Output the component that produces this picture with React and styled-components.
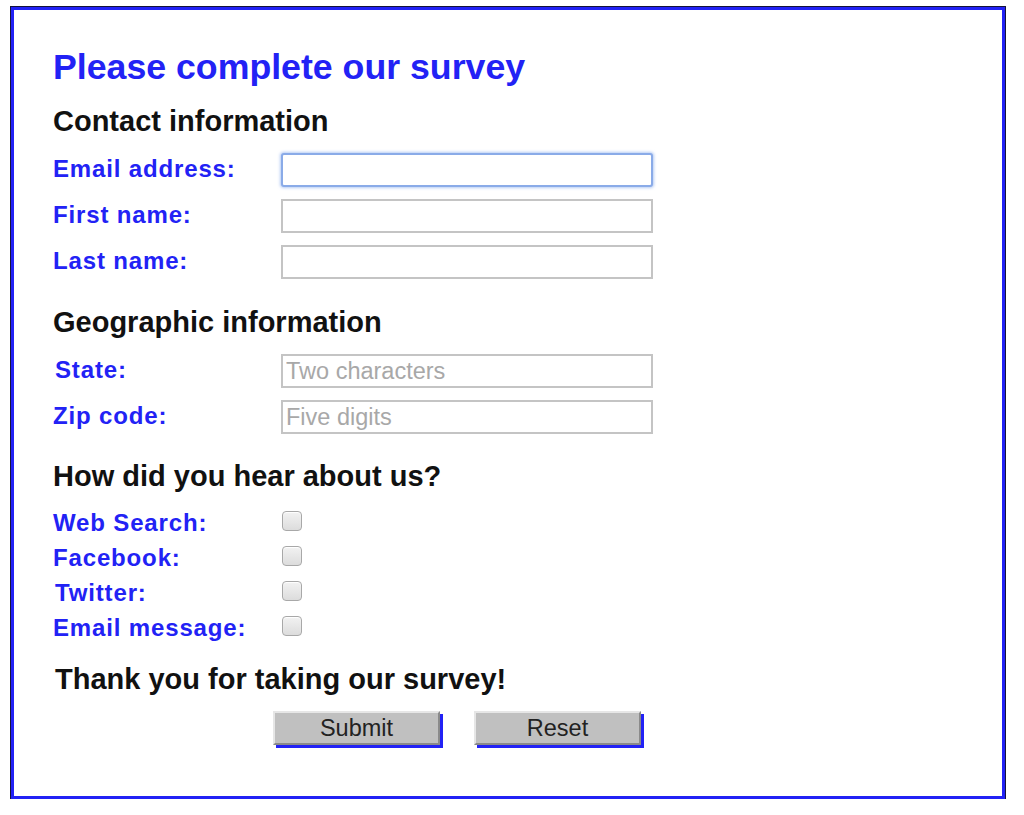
import React from "react";
import styled, { createGlobalStyle, css } from "styled-components";

const Global = createGlobalStyle`
  html, body { margin: 0; padding: 0; background: #ffffff; }
  body { font-family: "Liberation Sans", Arial, sans-serif; }
  * { box-sizing: border-box; }
`;

const BLUE = "#2222f5";

const Frame = styled.div`
  margin: 7px 0 0 11px;
  width: 994px;
  height: 792px;
  border: 3px solid ${BLUE};
  box-shadow: 0 0 0 1px #14143a;
  background: #fff;
  padding: 36px 0 0 39px;
`;

const Title = styled.h1`
  margin: 0;
  font-size: 35.7px;
  line-height: 43px;
  font-weight: bold;
  color: ${BLUE};
`;

const Section = styled.h2`
  margin: ${(p) => p.$top}px 0 0 ${(p) => p.$indent || 0}px;
  font-size: 29px;
  line-height: 34px;
  font-weight: bold;
  color: #111;
`;

const Fields = styled.div`
  display: flex;
  flex-direction: column;
  gap: ${(p) => p.$gap}px;
  margin-top: ${(p) => p.$top}px;
`;

const Row = styled.div`
  display: grid;
  grid-template-columns: 228px 372px;
  align-items: center;
  height: ${(p) => p.$h}px;
`;

const Label = styled.label`
  font-size: 24px;
  font-weight: bold;
  letter-spacing: 0.85px;
  color: ${BLUE};
  padding-left: ${(p) => p.$indent || 0}px;
  padding-bottom: ${(p) => p.$lift || 0}px;
`;

const TextInput = styled.input`
  width: 372px;
  height: 34px;
  margin: 0;
  padding: 0 3px;
  border: 2px solid #c4c4c4;
  background: #fff;
  font-family: "Liberation Sans", Arial, sans-serif;
  font-size: 23.5px;
  color: #222;
  outline: none;
  &::placeholder { color: #a8a8a8; }
  ${(p) =>
    p.$focused &&
    css`
      border-color: #8aabe8;
      border-radius: 3px;
      box-shadow: 0 0 3px 1px rgba(120, 160, 235, 0.55);
    `}
`;

const Check = styled.input.attrs({ type: "checkbox" })`
  appearance: none;
  -webkit-appearance: none;
  margin: 0 0 4px 1px;
  width: 20px;
  height: 20px;
  border: 1px solid #a8a8a8;
  border-radius: 4px;
  background: linear-gradient(#f2f2f2, #dcdcdc);
  box-shadow: inset 0 1px 1px #fff;
`;

const Buttons = styled.div`
  display: flex;
  gap: 34px;
  margin: 15px 0 0 220px;
`;

const Button = styled.button`
  width: 167px;
  height: 34px;
  margin: 0;
  padding: 0;
  background: #c0c0c0;
  border-style: solid;
  border-width: 2px;
  border-color: #e6e6e6 #8a8a8a #8a8a8a #e6e6e6;
  box-shadow: 3px 3px 0 ${BLUE};
  font-family: "Liberation Sans", Arial, sans-serif;
  font-size: 23.5px;
  color: #222;
  line-height: 29px;
`;

const contact = [
  { id: "email", label: "Email address:", focused: true },
  { id: "first", label: "First name:" },
  { id: "last", label: "Last name:" },
];

const geo = [
  { id: "state", label: "State:", placeholder: "Two characters", indent: 2 },
  { id: "zip", label: "Zip code:", placeholder: "Five digits" },
];

const sources = [
  { id: "web", label: "Web Search:" },
  { id: "fb", label: "Facebook:" },
  { id: "tw", label: "Twitter:", indent: 2 },
  { id: "em", label: "Email message:" },
];

export default function App() {
  return (
    <>
      <Global />
      <Frame>
        <form onSubmit={(e) => e.preventDefault()}>
          <Title>Please complete our survey</Title>

          <Section $top={15}>Contact information</Section>
          <Fields $gap={12} $top={15}>
            {contact.map((f) => (
              <Row key={f.id} $h={34}>
                <Label htmlFor={f.id} $lift={3}>{f.label}</Label>
                <TextInput id={f.id} type="text" $focused={f.focused} />
              </Row>
            ))}
          </Fields>

          <Section $top={26}>Geographic information</Section>
          <Fields $gap={12} $top={15}>
            {geo.map((f) => (
              <Row key={f.id} $h={34}>
                <Label htmlFor={f.id} $indent={f.indent} $lift={3}>
                  {f.label}
                </Label>
                <TextInput id={f.id} type="text" placeholder={f.placeholder} />
              </Row>
            ))}
          </Fields>

          <Section $top={25}>How did you hear about us?</Section>
          <Fields $gap={0} $top={12}>
            {sources.map((f) => (
              <Row key={f.id} $h={35}>
                <Label htmlFor={f.id} $indent={f.indent}>
                  {f.label}
                </Label>
                <Check id={f.id} />
              </Row>
            ))}
          </Fields>

          <Section $top={17} $indent={2}>
            Thank you for taking our survey!
          </Section>
          <Buttons>
            <Button type="submit">Submit</Button>
            <Button type="reset">Reset</Button>
          </Buttons>
        </form>
      </Frame>
    </>
  );
}
